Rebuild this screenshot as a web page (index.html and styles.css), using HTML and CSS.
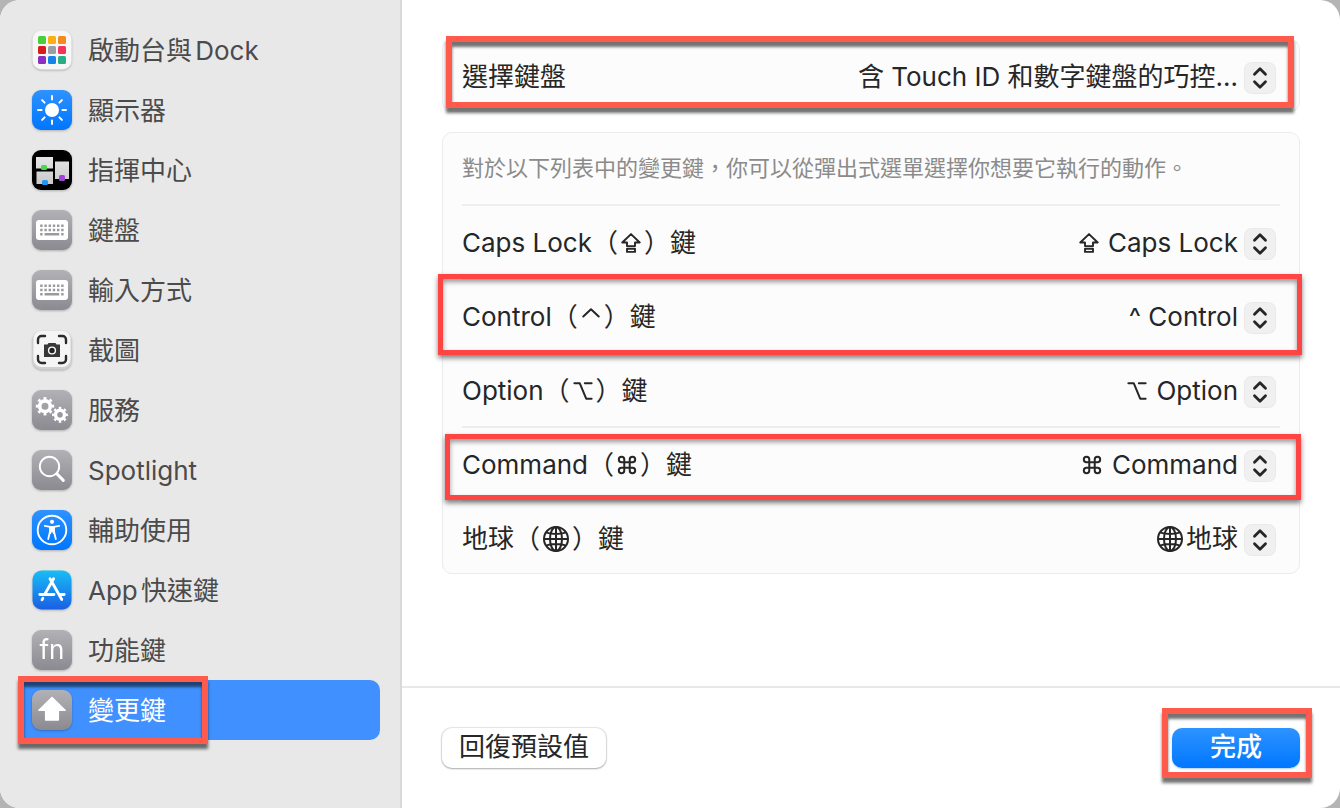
FILE: index.html
```html
<!DOCTYPE html>
<html lang="zh-Hant-TW">
<head>
  <meta charset="UTF-8" />
  <meta name="viewport" content="width=device-width, initial-scale=1" />
  <title>變更鍵</title>
  <link rel="stylesheet" href="styles.css">
</head>
<body>
  <!-- shared icons -->
  <svg class="defs" aria-hidden="true">
    <defs>
      <linearGradient id="gray" x1="0" y1="0" x2="0" y2="1"><stop offset="0" stop-color="#b1b1b6"/><stop offset="1" stop-color="#8b8a90"/></linearGradient>
      <linearGradient id="blue" x1="0" y1="0" x2="0" y2="1"><stop offset="0" stop-color="#2f92ff"/><stop offset="1" stop-color="#0076ff"/></linearGradient>
      <linearGradient id="store" x1="0" y1="0" x2="0" y2="1"><stop offset="0" stop-color="#18bdf6"/><stop offset="1" stop-color="#1a5fe4"/></linearGradient>
      <linearGradient id="pane" x1="0" y1="0" x2="0" y2="1"><stop offset="0" stop-color="#e6e6e6"/><stop offset="1" stop-color="#c9c9c9"/></linearGradient>
    </defs>
    <symbol id="keyboard" viewBox="0 0 40 40">
      <rect width="40" height="40" rx="9" fill="url(#gray)"/>
      <rect x="4" y="10" width="32" height="20" rx="3" fill="#fff"/>
      <path d="M8.2 15.7h24M8.2 20h24" stroke="#9a999e" stroke-width="2.4" stroke-dasharray="2.4 1.8"/>
      <path d="M8.2 24.3h2.4M12.6 24.3h14.6M29.2 24.3h2.4" stroke="#9a999e" stroke-width="2.4"/>
    </symbol>
    <symbol id="stepper" viewBox="0 0 32 32">
      <rect x=".5" y=".5" width="31" height="31" rx="7" fill="#f0f0f0" stroke="#e9e9e9"/>
      <path d="M10.5 12.2 16 6.8l5.5 5.4M10.5 19.8 16 25.2l5.5-5.4" fill="none" stroke="#262626" stroke-width="2.8" stroke-linecap="round" stroke-linejoin="round"/>
    </symbol>
    <symbol id="caps" viewBox="0 0 22 22">
      <path d="M11 1.2 20.6 10.4H15.4V14.4H6.6V10.4H1.4Z M6.6 17.3h8.8v3.5H6.6Z" fill="none" stroke="#262626" stroke-width="2.1" stroke-linejoin="round"/>
    </symbol>
    <symbol id="option" viewBox="0 0 22 22">
      <path d="M1.5 2.5H7.5L14.5 19.500H20.500M13 2.500H20.500" fill="none" stroke="#262626" stroke-width="2.200" stroke-linecap="round" stroke-linejoin="round"/>
    </symbol>
    <symbol id="command" viewBox="0 0 22 22">
      <path d="M8 8V5a3 3 0 1 0-3 3H17a3 3 0 1 0-3-3V17a3 3 0 1 0 3-3H5a3 3 0 1 0 3 3Z" fill="none" stroke="#262626" stroke-width="2.200"/>
    </symbol>
    <symbol id="globe" viewBox="0 0 26 26">
      <g fill="none" stroke="#262626" stroke-width="2">
        <circle cx="13" cy="13" r="12"/>
        <ellipse cx="13" cy="13" rx="6" ry="12"/>
        <path d="M13 1v24M1 13h24M3.500 6.600Q13 9.500 22.500 6.600M3.500 19.400Q13 16.500 22.500 19.400"/>
      </g>
    </symbol>
  </svg>

  <div class="window">
    <nav class="sidebar">
      <a class="item" href="#dock">
        <svg class="icon" viewBox="0 0 40 40">
          <rect x=".5" y=".5" width="39" height="39" rx="9" fill="#f7f7f7"/>
          <rect x="6" y="6" width="8" height="8" rx="1.500" fill="#49cf3c"/><rect x="16" y="6" width="8" height="8" rx="1.500" fill="#fbb012"/><rect x="26" y="6" width="8" height="8" rx="1.500" fill="#f58a1c"/>
          <rect x="6" y="16" width="8" height="8" rx="1.500" fill="#d81b1b"/><rect x="16" y="16" width="8" height="8" rx="1.500" fill="#9a9fa3"/><rect x="26" y="16" width="8" height="8" rx="1.500" fill="#f8315b"/>
          <rect x="6" y="26" width="8" height="8" rx="1.500" fill="#8b2fc0"/><rect x="16" y="26" width="8" height="8" rx="1.500" fill="#1583ea"/><rect x="26" y="26" width="8" height="8" rx="1.500" fill="#2bac86"/>
        </svg>
        <span class="name">啟動台與Dock</span>
      </a>
      <a class="item" href="#displays">
        <svg class="icon" viewBox="0 0 40 40">
          <rect width="40" height="40" rx="9" fill="url(#blue)"/>
          <circle cx="20" cy="20" r="7" fill="#fff"/>
          <path d="M20 6v3.600M20 30.400V34M6 20h3.600M30.400 20H34M10.100 10.100l2.500 2.500M27.400 27.400l2.500 2.500M10.100 29.900l2.500-2.500M27.400 12.600l2.500-2.500" stroke="#fff" stroke-width="2" stroke-linecap="round"/>
        </svg>
        <span class="name">顯示器</span>
      </a>
      <a class="item" href="#mission-control">
        <svg class="icon" viewBox="0 0 40 40">
          <rect width="40" height="40" rx="9" fill="#000"/>
          <path d="M4 7h17v11.500H4zM4.500 21.500h16.500V34H4.500zM23 11.500h14V29H23z" fill="url(#pane)"/>
          <rect x="9" y="15" width="6" height="5" rx="1.500" fill="#45d94a"/>
          <rect x="10" y="30" width="6" height="5" rx="1.500" fill="#1f97f5"/>
          <rect x="27" y="25" width="6" height="6" rx="1.500" fill="#a045dc"/>
        </svg>
        <span class="name">指揮中心</span>
      </a>
      <a class="item" href="#keyboard-keys">
        <svg class="icon"><use href="#keyboard"/></svg>
        <span class="name">鍵盤</span>
      </a>
      <a class="item" href="#input">
        <svg class="icon"><use href="#keyboard"/></svg>
        <span class="name">輸入方式</span>
      </a>
      <a class="item" href="#screenshots">
        <svg class="icon" viewBox="0 0 40 40">
          <rect x=".5" y="1" width="39" height="38.500" rx="9" fill="#d0d0d0"/>
          <rect x="1.500" y="1" width="37" height="36" rx="8" fill="#f5f5f5"/>
          <path d="M6 13V9.500a3.500 3.500 0 0 1 3.500-3.500H13M27 6h3.500a3.500 3.500 0 0 1 3.500 3.500V13M34 26v3.500a3.500 3.500 0 0 1-3.500 3.500H27M13 33H9.500A3.500 3.500 0 0 1 6 29.500V26" fill="none" stroke="#2b2b2b" stroke-width="2.400" stroke-linecap="round"/>
          <path d="M12 14.500h3.500l1-1.500h7l1 1.500H28V27H12z" fill="#383838"/>
          <circle cx="20" cy="20.500" r="3.400" fill="#222" stroke="#fff" stroke-width="1.400"/>
        </svg>
        <span class="name">截圖</span>
      </a>
      <a class="item" href="#services">
        <svg class="icon" viewBox="0 0 40 40">
          <rect width="40" height="40" rx="9" fill="url(#gray)"/>
          <g fill="none" stroke="#fff">
            <circle cx="13" cy="16.200" r="5.300" stroke-width="3.600"/>
            <circle cx="13" cy="16.200" r="8" stroke-width="2.400" pathLength="80" stroke-dasharray="4.600 5.400" stroke-dashoffset="2.300"/>
            <circle cx="28" cy="24.800" r="4.500" stroke-width="3.400"/>
            <circle cx="28" cy="24.800" r="6.900" stroke-width="2.200" pathLength="80" stroke-dasharray="4.600 5.400" stroke-dashoffset="2.300"/>
          </g>
        </svg>
        <span class="name">服務</span>
      </a>
      <a class="item" href="#spotlight">
        <svg class="icon" viewBox="0 0 40 40">
          <rect width="40" height="40" rx="9" fill="url(#gray)"/>
          <circle cx="17.500" cy="16.500" r="9.700" fill="none" stroke="#fff" stroke-width="1.900"/>
          <path d="m24.800 23.800 6.500 6.600" stroke="#fff" stroke-width="3" stroke-linecap="round"/>
        </svg>
        <span class="name">Spotlight</span>
      </a>
      <a class="item" href="#accessibility">
        <svg class="icon" viewBox="0 0 40 40">
          <rect width="40" height="40" rx="9" fill="url(#blue)"/>
          <circle cx="20" cy="20" r="14.300" fill="none" stroke="#fff" stroke-width="1.900"/>
          <circle cx="20" cy="11.800" r="2.100" fill="#fff"/>
          <path d="M12.800 15.800 18 16.800V21.500L16.200 29M27.200 15.800 22 16.800V21.500L23.800 29" fill="none" stroke="#fff" stroke-width="1.800" stroke-linecap="round" stroke-linejoin="round"/>
          <path d="M17.500 16h5v5.500l.5 2.500h-1.800L20 21.500 18.800 24H17l.5-2.500z" fill="#fff"/>
        </svg>
        <span class="name">輔助使用</span>
      </a>
      <a class="item" href="#app-shortcuts">
        <svg class="icon" viewBox="0 0 40 40">
          <rect x=".5" y=".5" width="39" height="39" rx="9" fill="url(#store)"/>
          <path d="M21.600 8.800 12.800 24.200M18 8.800 29.800 29.500M7.800 24.500H22M26.800 24.500H32.200M10.900 28.300 10 29.900" stroke="#fff" stroke-width="2.800" stroke-linecap="round"/>
        </svg>
        <span class="name">App快速鍵</span>
      </a>
      <a class="item" href="#function-keys">
        <span class="icon fn" aria-hidden="true">fn</span>
        <span class="name">功能鍵</span>
      </a>
      <a class="item selected" href="#modifier-keys" aria-current="page">
        <svg class="icon" viewBox="0 0 40 40">
          <rect width="40" height="40" rx="9" fill="url(#gray)"/>
          <path d="M20 7.500 33 20.300H26.300V30H13.700V20.300H7Z" fill="#fff" stroke="#fff" stroke-width="1.600" stroke-linejoin="round"/>
        </svg>
        <span class="name">變更鍵</span>
        <span class="mark mark-item"></span>
      </a>
    </nav>

    <form class="main">
      <div class="content">
        <div class="card">
          <div class="row">
            <label for="keyboard-select">選擇鍵盤</label>
            <div class="popup">
              <select id="keyboard-select"><option>含 Touch ID 和數字鍵盤的巧控…</option></select>
              <svg class="stepper"><use href="#stepper"/></svg>
            </div>
            <span class="mark mark-keyboard"></span>
          </div>
        </div>

        <div class="card">
          <p class="hint">對於以下列表中的變更鍵，你可以從彈出式選單選擇你想要它執行的動作。</p>
          <div class="row">
            <label for="caps-key">Caps Lock（<svg class="key"><use href="#caps"/></svg>）鍵</label>
            <div class="popup">
              <svg class="key"><use href="#caps"/></svg>
              <select id="caps-key"><option>Caps Lock</option></select>
              <svg class="stepper"><use href="#stepper"/></svg>
            </div>
          </div>
          <div class="row">
            <label for="control-key">Control（<svg class="key" viewBox="0 0 22 22"><path d="M2.500 10.500 11 2.500 19.500 10.500" fill="none" stroke="#262626" stroke-width="2.200" stroke-linecap="round" stroke-linejoin="round"/></svg>）鍵</label>
            <div class="popup">
              <select id="control-key"><option>^ Control</option></select>
              <svg class="stepper"><use href="#stepper"/></svg>
            </div>
            <span class="mark mark-control"></span>
          </div>
          <div class="row">
            <label for="option-key">Option（<svg class="key"><use href="#option"/></svg>）鍵</label>
            <div class="popup">
              <svg class="key"><use href="#option"/></svg>
              <select id="option-key"><option>Option</option></select>
              <svg class="stepper"><use href="#stepper"/></svg>
            </div>
          </div>
          <div class="row">
            <label for="command-key">Command（<svg class="key"><use href="#command"/></svg>）鍵</label>
            <div class="popup">
              <svg class="key"><use href="#command"/></svg>
              <select id="command-key"><option>Command</option></select>
              <svg class="stepper"><use href="#stepper"/></svg>
            </div>
            <span class="mark mark-command"></span>
          </div>
          <div class="row">
            <label for="globe-key">地球（<svg class="key globe"><use href="#globe"/></svg>）鍵</label>
            <div class="popup">
              <svg class="key globe"><use href="#globe"/></svg>
              <select id="globe-key"><option>地球</option></select>
              <svg class="stepper"><use href="#stepper"/></svg>
            </div>
          </div>
        </div>
      </div>

      <div class="footer">
        <button type="reset" class="btn">回復預設值</button>
        <div class="done">
          <button type="button" class="btn primary">完成</button>
          <span class="mark mark-done"></span>
        </div>
      </div>
    </form>
  </div>
</body>
</html>
```
FILE: styles.css
```css
*, *::before, *::after { margin: 0; padding: 0; box-sizing: border-box; }

body {
  font-family: Inter, "Noto Sans CJK TC", sans-serif;
  font-size: 26px;
  line-height: 30px;
  color: #262626;
  background: #b4b4b4;
  text-autospace: normal;
}

.defs {
  position: absolute;
  width: 0;
  height: 0;
}

.window {
  display: flex;
  min-height: 100vh;
  border-radius: 20px;
  overflow: hidden;
  background: #fff;
}

/* sidebar */

.sidebar {
  flex: 0 0 402px;
  padding: 20px;
  background: #e8e8e8;
  border-right: 2px solid #d9d9d9;
}

.item {
  position: relative;
  display: flex;
  align-items: center;
  gap: 16px;
  height: 60px;
  padding: 0 12px;
  border-radius: 10px;
  color: #4b4b4b;
  text-decoration: none;
}

.item.selected {
  background: #4091ff;
  color: #fff;
}

.name {
  padding-top: 2px;
}

.icon {
  flex: none;
  width: 40px;
  height: 40px;
  filter: drop-shadow(0 1px 1px rgba(0, 0, 0, 0.25));
}

.fn {
  border-radius: 9px;
  background: linear-gradient(#b1b1b6, #8b8a90);
  color: #fff;
  line-height: 40px;
  text-align: center;
}

/* main */

.main {
  flex: 1;
  display: flex;
  flex-direction: column;
}

.content {
  flex: 1;
  display: flex;
  flex-direction: column;
  gap: 20px;
  padding: 39px 40px;
}

.card {
  padding: 0 19px;
  border: 1px solid #ececec;
  border-radius: 10px;
  background: #fcfcfc;
}

.hint {
  padding: 20px 0 21px;
  border-bottom: 2px solid #eeeeee;
  font-size: 22px;
  color: #8b8b8b;
}

.row {
  position: relative;
  display: flex;
  justify-content: space-between;
  padding: 22px 4px 18px 0;
  border-bottom: 2px solid #eeeeee;
}

.row:last-child {
  padding-bottom: 17px;
  border-bottom: none;
}

.key {
  width: 20px;
  height: 20px;
  margin: 0 3px;
  vertical-align: -1px;
}

.globe {
  width: 26px;
  height: 26px;
  vertical-align: -4px;
}

.popup {
  position: relative;
  display: flex;
  align-items: center;
  height: 32px;
  padding-bottom: 2px;
}

.popup .key {
  margin: 0 9px 0 0;
}

.popup .globe {
  margin-right: 2px;
}

.popup select {
  appearance: none;
  height: 30px;
  padding-right: 38px;
  border: none;
  background: none;
  font: inherit;
  color: inherit;
  text-align-last: right;
}

.stepper {
  position: absolute;
  right: 0;
  top: 0;
  width: 32px;
  height: 32px;
  pointer-events: none;
}

/* footer */

.footer {
  display: flex;
  justify-content: space-between;
  padding: 40px;
  border-top: 2px solid #e8e8e8;
}

.btn {
  height: 40px;
  padding: 0 17px 2px;
  border: none;
  border-radius: 10px;
  background: #fff;
  box-shadow: 0 0 1px 1px rgba(0, 0, 0, 0.1), 0 1px 2px rgba(0, 0, 0, 0.25);
  font: inherit;
  color: inherit;
}

.btn.primary {
  width: 128px;
  background: linear-gradient(#2d93ff, #0077ff);
  box-shadow: 0 1px 2px rgba(0, 90, 220, 0.3);
  color: #fff;
  font-weight: 500;
}

.done {
  position: relative;
}

/* red frames laid over the highlighted controls */

.mark {
  position: absolute;
  border: 6px solid #ff5a4b;
  box-shadow: 0 5px 3px rgba(0, 0, 0, 0.55), inset 0 5px 3px rgba(0, 0, 0, 0.55);
  pointer-events: none;
}

.mark-item {
  inset: -4px 172px -4px -2px;
}

.mark-keyboard {
  inset: -4px -14px 3px -16px;
}

.mark-control,
.mark-command {
  border: 5px solid #ff4444;
  box-shadow: 0 3px 5px rgba(0, 0, 0, 0.5), inset 0 3px 5px rgba(0, 0, 0, 0.4);
}

.mark-control {
  inset: -6px -22px -3px -24px;
}

.mark-command {
  inset: 6px -21px 0 -17px;
}

.mark-done {
  inset: -20px -12px -10px -10px;
}
```
